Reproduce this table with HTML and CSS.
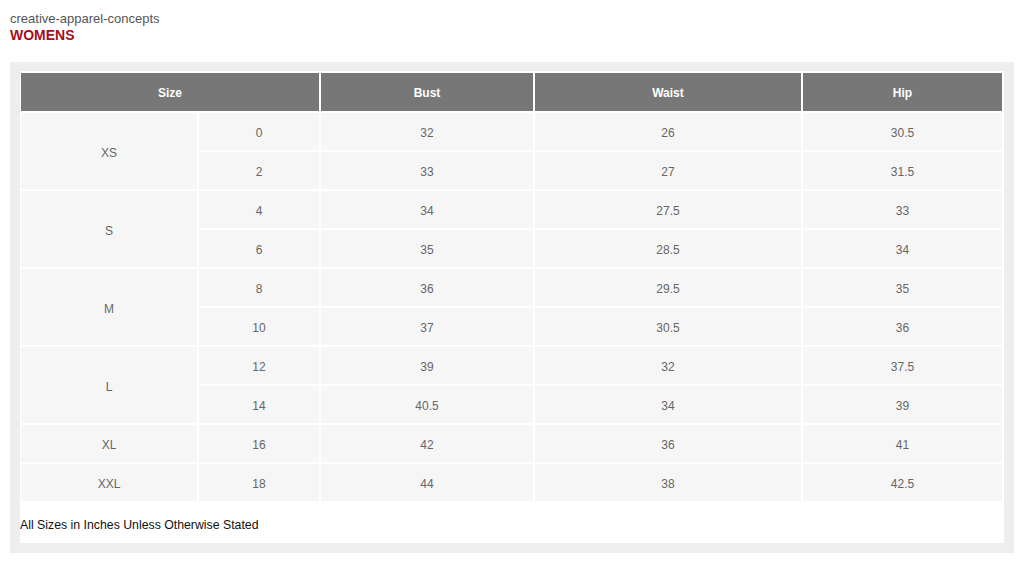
FILE: index.html
```html
<!DOCTYPE html>
<html>
<head>
<meta charset="utf-8">
<link rel="stylesheet" href="styles.css">
</head>
<body>
<div class="brand">
  <div class="brand-name">creative-apparel-concepts</div>
  <div class="brand-cat">WOMENS</div>
</div>
<div class="panel">
  <div class="sheet">
    <table class="chart">
      <colgroup>
        <col class="c-size">
        <col class="c-num">
        <col class="c-bust">
        <col class="c-waist">
        <col class="c-hip">
      </colgroup>
      <thead>
        <tr><th colspan="2">Size</th><th>Bust</th><th>Waist</th><th>Hip</th></tr>
      </thead>
      <tbody>
        <tr><td rowspan="2">XS</td><td>0</td><td>32</td><td>26</td><td>30.5</td></tr>
        <tr><td>2</td><td>33</td><td>27</td><td>31.5</td></tr>
        <tr><td rowspan="2">S</td><td>4</td><td>34</td><td>27.5</td><td>33</td></tr>
        <tr><td>6</td><td>35</td><td>28.5</td><td>34</td></tr>
        <tr><td rowspan="2">M</td><td>8</td><td>36</td><td>29.5</td><td>35</td></tr>
        <tr><td>10</td><td>37</td><td>30.5</td><td>36</td></tr>
        <tr><td rowspan="2">L</td><td>12</td><td>39</td><td>32</td><td>37.5</td></tr>
        <tr><td>14</td><td>40.5</td><td>34</td><td>39</td></tr>
        <tr><td>XL</td><td>16</td><td>42</td><td>36</td><td>41</td></tr>
        <tr><td>XXL</td><td>18</td><td>44</td><td>38</td><td>42.5</td></tr>
      </tbody>
    </table>
    <div class="note">All Sizes in Inches Unless Otherwise Stated</div>
  </div>
</div>
</body>
</html>
```

FILE: styles.css
```css
html, body {
  margin: 0;
  padding: 0;
  background: #fff;
  font-family: "Liberation Sans", Arial, sans-serif;
}
.brand {
  padding: 11px 10px 0 10px;
  height: 51px;
  box-sizing: border-box;
}
.brand-name {
  font-size: 13px;
  line-height: 16px;
  color: #555;
}
.brand-cat {
  font-size: 14px;
  line-height: 16px;
  font-weight: bold;
  color: #a50f1c;
}
.panel {
  margin: 11px 10px 0 10px;
  padding: 10px;
  background: #eeeeee;
  width: 1004px;
  box-sizing: border-box;
}
.sheet {
  background: #fff;
  padding: 0;
}
.chart {
  table-layout: fixed;
  width: 985px;
  border-collapse: separate;
  border-spacing: 2px;
  margin: -1px -1px 0 -1px;
  font-size: 12px;
}
.c-size { width: 176px; }
.c-num { width: 120px; }
.c-bust { width: 212px; }
.c-waist { width: 266px; }
.c-hip { width: 199px; }
.chart th {
  background: #777;
  color: #fff;
  font-weight: bold;
  height: 38px;
  box-sizing: border-box;
  padding: 2px 0 0 0;
  text-align: center;
}
.chart td {
  background: #f6f6f6;
  color: #666;
  height: 37px;
  box-sizing: border-box;
  padding: 3px 0 0 0;
  text-align: center;
}
.note {
  font-size: 12.3px;
  line-height: 14px;
  color: #111;
  padding: 15px 0 11px 0;
}
```
